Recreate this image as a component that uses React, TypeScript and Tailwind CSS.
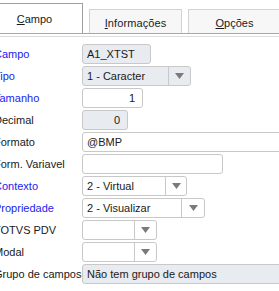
const Arrow = () => (
  <svg width="9" height="6" viewBox="0 0 9 6" className="block">
    <path d="M0 0 H9 L4.5 6 Z" fill="#7a7a7a" />
  </svg>
);

type BoxProps = {
  width: string;
  value?: string;
  gray?: boolean;
  right?: boolean;
};

const Box = ({ width, value, gray, right }: BoxProps) => (
  <div
    className={`${width} h-[20px] shrink-0 rounded-[3px] border border-[#c8c8c8] flex items-center px-[4px] ${
      gray ? 'bg-[#e8ebf0]' : 'bg-white'
    } ${right ? 'justify-end pr-[7px]' : ''}`}
  >
    {value}
  </div>
);

type SelectProps = {
  width: string;
  textWidth: string;
  value?: string;
};

const Select = ({ width, textWidth, value }: SelectProps) => (
  <div className={`${width} h-[20px] shrink-0 rounded-[3px] border border-[#c8c8c8] bg-white flex`}>
    <div className={`${textWidth} h-full border-r border-[#c8c8c8] flex items-center px-[4px]`}>{value}</div>
    <div className="flex-1 flex items-center justify-center">
      <Arrow />
    </div>
  </div>
);

const Row = ({ label, blue, children }: { label: string; blue?: boolean; children: React.ReactNode }) => (
  <div className="flex items-center h-[20px]">
    <div
      className={`w-[88px] -ml-[6px] shrink-0 whitespace-nowrap overflow-hidden ${
        blue ? 'text-[#2222ee]' : 'text-[#1a1a1a]'
      }`}
    >
      {label}
    </div>
    {children}
  </div>
);

export default function App() {
  return (
    <div
      className="w-[279px] h-[291px] overflow-hidden bg-white text-[11px] text-[#1a1a1a] leading-none"
      style={{ fontFamily: '"Liberation Sans", Arial, sans-serif' }}
    >
      {/* tabs */}
      <div className="h-[34px] flex items-end border-b border-[#a9a9a9]">
        <div className="w-[83px] h-[30px] shrink-0 bg-white border-t border-r border-[#a0a0a0] flex items-center justify-center pt-[1px] pr-[13px]">
          <span>
            <span className="underline">C</span>ampo
          </span>
        </div>
        <div className="w-[93px] h-[24px] ml-[6px] shrink-0 bg-[#f7f7f7] border border-b-0 border-[#d2d2d2] flex items-center justify-center pt-[3px]">
          <span className="tracking-[0.1px]">
            <span className="underline">I</span>nformações
          </span>
        </div>
        <div className="w-[100px] h-[24px] ml-[6px] shrink-0 bg-[#f7f7f7] border border-b-0 border-r-0 border-[#d2d2d2] flex items-center justify-center pt-[3px] pr-[8px]">
          <span>
            <span className="underline">O</span>pções
          </span>
        </div>
      </div>
      <div className="h-[2px]" />
      <div className="h-px bg-[#dddddd]" />

      {/* form */}
      <div className="mt-[7px] flex flex-col gap-[2px]">
        <Row label="Campo" blue>
          <Box width="w-[69px]" value="A1_XTST" gray />
        </Row>
        <Row label="Tipo" blue>
          <div className="w-[109px] h-[20px] shrink-0 rounded-[3px] border border-[#c8c8c8] bg-[#e8ebf0] flex">
            <div className="w-[86px] h-full border-r border-[#c8c8c8] flex items-center px-[4px]">1 - Caracter</div>
            <div className="flex-1 flex items-center justify-center">
              <Arrow />
            </div>
          </div>
        </Row>
        <Row label="Tamanho" blue>
          <Box width="w-[61px]" value="1" right />
        </Row>
        <Row label="Decimal">
          <Box width="w-[46px]" value="0" gray right />
        </Row>
        <Row label="Formato">
          <Box width="w-[210px]" value="@BMP" />
        </Row>
        <Row label="Form. Variavel">
          <Box width="w-[141px]" />
        </Row>
        <Row label="Contexto" blue>
          <Select width="w-[105px]" textWidth="w-[83px]" value="2 - Virtual" />
        </Row>
        <Row label="Propriedade" blue>
          <Select width="w-[123px]" textWidth="w-[99px]" value="2 - Visualizar" />
        </Row>
        <Row label="TOTVS PDV">
          <Select width="w-[75px]" textWidth="w-[52px]" />
        </Row>
        <Row label="Modal">
          <Select width="w-[75px]" textWidth="w-[52px]" />
        </Row>
        <Row label="Grupo de campos">
          <Box width="w-[210px]" value="Não tem grupo de campos" gray />
        </Row>
      </div>
    </div>
  );
}
